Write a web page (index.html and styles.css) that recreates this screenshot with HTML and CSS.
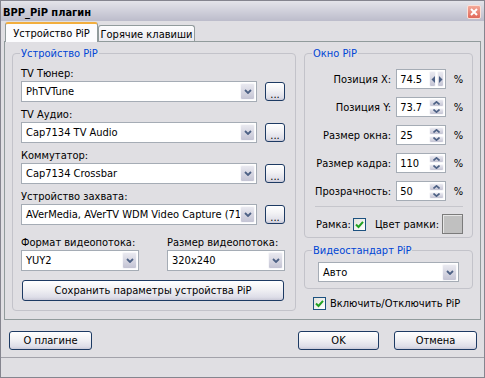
FILE: index.html
```html
<!DOCTYPE html>
<html lang="ru">
<head>
  <meta charset="UTF-8" />
  <title>BPP_PiP плагин</title>
  <link rel="stylesheet" href="styles.css">
</head>
<body>
  <div class="window">
    <div class="titlebar">
      <span class="title">BPP_PiP плагин</span>
      <span class="close"><svg width="8" height="8" viewBox="0 0 8 8"><path d="M1 1L7 7M7 1L1 7" stroke="#fff" stroke-width="2"/></svg></span>
    </div>

    <div class="client">
      <div class="tabs">
        <div class="tab active">Устройство PiP</div>
        <div class="tab">Горячие клавиши</div>
      </div>

      <div class="page">
        <fieldset class="group device">
          <legend>Устройство PiP</legend>
          <div class="fields">
            <div class="field">
              <div class="lbl">TV Тюнер:</div>
              <div class="row">
                <div class="combo"><span class="val">PhTVTune</span><span class="drop"><svg width="8" height="5" viewBox="0 0 8 5"><path d="M1 1L4 4L7 1" fill="none" stroke="#4d6185" stroke-width="1.8"/></svg></span></div>
                <button class="btn more">...</button>
              </div>
            </div>
            <div class="field">
              <div class="lbl">TV Аудио:</div>
              <div class="row">
                <div class="combo"><span class="val">Cap7134 TV Audio</span><span class="drop"><svg width="8" height="5" viewBox="0 0 8 5"><path d="M1 1L4 4L7 1" fill="none" stroke="#4d6185" stroke-width="1.8"/></svg></span></div>
                <button class="btn more">...</button>
              </div>
            </div>
            <div class="field">
              <div class="lbl">Коммутатор:</div>
              <div class="row">
                <div class="combo"><span class="val">Cap7134 Crossbar</span><span class="drop"><svg width="8" height="5" viewBox="0 0 8 5"><path d="M1 1L4 4L7 1" fill="none" stroke="#4d6185" stroke-width="1.8"/></svg></span></div>
                <button class="btn more">...</button>
              </div>
            </div>
            <div class="field">
              <div class="lbl">Устройство захвата:</div>
              <div class="row">
                <div class="combo"><span class="val">AVerMedia, AVerTV WDM Video Capture (7134)</span><span class="drop"><svg width="8" height="5" viewBox="0 0 8 5"><path d="M1 1L4 4L7 1" fill="none" stroke="#4d6185" stroke-width="1.8"/></svg></span></div>
                <button class="btn more">...</button>
              </div>
            </div>
          </div>

          <div class="pair">
            <div class="field">
              <div class="lbl">Формат видеопотока:</div>
              <div class="combo"><span class="val">YUY2</span><span class="drop"><svg width="8" height="5" viewBox="0 0 8 5"><path d="M1 1L4 4L7 1" fill="none" stroke="#4d6185" stroke-width="1.8"/></svg></span></div>
            </div>
            <div class="field">
              <div class="lbl">Размер видеопотока:</div>
              <div class="combo"><span class="val">320x240</span><span class="drop"><svg width="8" height="5" viewBox="0 0 8 5"><path d="M1 1L4 4L7 1" fill="none" stroke="#4d6185" stroke-width="1.8"/></svg></span></div>
            </div>
          </div>

          <button class="btn save">Сохранить параметры устройства PiP</button>
        </fieldset>

        <div class="side">
          <fieldset class="group pip">
            <legend>Окно PiP</legend>
            <div class="params">
              <span class="plbl">Позиция X:</span>
              <div class="spin"><span class="val">74.5</span>
                <span class="arrows horiz">
                  <i><svg width="4" height="7" viewBox="0 0 4 7"><path d="M4 0V7L0.5 3.5Z" fill="#4d6185"/></svg></i>
                  <i><svg width="4" height="7" viewBox="0 0 4 7"><path d="M0 0V7L3.5 3.5Z" fill="#4d6185"/></svg></i>
                </span>
              </div>
              <span class="pct">%</span>

              <span class="plbl">Позиция Y:</span>
              <div class="spin"><span class="val">73.7</span>
                <span class="arrows">
                  <i><svg width="7" height="4" viewBox="0 0 7 4"><path d="M0.5 3.5L3.5 0.8L6.5 3.5" fill="none" stroke="#4d6185" stroke-width="1.6"/></svg></i>
                  <i><svg width="7" height="4" viewBox="0 0 7 4"><path d="M0.5 0.5L3.5 3.2L6.5 0.5" fill="none" stroke="#4d6185" stroke-width="1.6"/></svg></i>
                </span>
              </div>
              <span class="pct">%</span>

              <span class="plbl">Размер окна:</span>
              <div class="spin"><span class="val">25</span>
                <span class="arrows">
                  <i><svg width="7" height="4" viewBox="0 0 7 4"><path d="M0.5 3.5L3.5 0.8L6.5 3.5" fill="none" stroke="#4d6185" stroke-width="1.6"/></svg></i>
                  <i><svg width="7" height="4" viewBox="0 0 7 4"><path d="M0.5 0.5L3.5 3.2L6.5 0.5" fill="none" stroke="#4d6185" stroke-width="1.6"/></svg></i>
                </span>
              </div>
              <span class="pct">%</span>

              <span class="plbl">Размер кадра:</span>
              <div class="spin"><span class="val">110</span>
                <span class="arrows">
                  <i><svg width="7" height="4" viewBox="0 0 7 4"><path d="M0.5 3.5L3.5 0.8L6.5 3.5" fill="none" stroke="#4d6185" stroke-width="1.6"/></svg></i>
                  <i><svg width="7" height="4" viewBox="0 0 7 4"><path d="M0.5 0.5L3.5 3.2L6.5 0.5" fill="none" stroke="#4d6185" stroke-width="1.6"/></svg></i>
                </span>
              </div>
              <span class="pct">%</span>

              <span class="plbl">Прозрачность:</span>
              <div class="spin"><span class="val">50</span>
                <span class="arrows">
                  <i><svg width="7" height="4" viewBox="0 0 7 4"><path d="M0.5 3.5L3.5 0.8L6.5 3.5" fill="none" stroke="#4d6185" stroke-width="1.6"/></svg></i>
                  <i><svg width="7" height="4" viewBox="0 0 7 4"><path d="M0.5 0.5L3.5 3.2L6.5 0.5" fill="none" stroke="#4d6185" stroke-width="1.6"/></svg></i>
                </span>
              </div>
              <span class="pct">%</span>
            </div>

            <div class="sep"></div>

            <div class="frame-row">
              <span>Рамка:</span>
              <span class="check"><svg width="9" height="9" viewBox="0 0 9 9"><path d="M1 4.5L3.5 7L8 1.8" fill="none" stroke="#21a121" stroke-width="2"/></svg></span>
              <span class="color-lbl">Цвет рамки:</span>
              <span class="swatch"></span>
            </div>
          </fieldset>

          <fieldset class="group std">
            <legend>Видеостандарт PiP</legend>
            <div class="combo"><span class="val">Авто</span><span class="drop"><svg width="8" height="5" viewBox="0 0 8 5"><path d="M1 1L4 4L7 1" fill="none" stroke="#4d6185" stroke-width="1.8"/></svg></span></div>
          </fieldset>

          <div class="enable">
            <span class="check"><svg width="9" height="9" viewBox="0 0 9 9"><path d="M1 4.5L3.5 7L8 1.8" fill="none" stroke="#21a121" stroke-width="2"/></svg></span>
            <span>Включить/Отключить PiP</span>
          </div>
        </div>
      </div>

      <div class="footer">
        <button class="btn wide">О плагине</button>
        <button class="btn ok">OK</button>
        <button class="btn wide">Отмена</button>
      </div>
    </div>

    <div class="status"></div>
  </div>
</body>
</html>
```

FILE: styles.css
```css
* { box-sizing: border-box; }
body { margin: 0; background: #e0dfe3; font-family: "DejaVu Sans Condensed", "Liberation Sans", sans-serif; font-size: 11px; color: #000; }

.window { width: 485px; height: 378px; display: flex; flex-direction: column; background: #e0dfe3; border: 1px solid #85858f; }

.titlebar { height: 20px; flex: none; display: flex; align-items: flex-start; padding: 0 3px 0 2px; background: linear-gradient(#e4e4ea, #bcbccb); }
.title { font-weight: bold; line-height: 13px; margin-top: 5px; }
.close { margin-left: auto; margin-top: 4px; width: 14px; height: 14px; border: 1px solid #fbe0d8; border-radius: 2px; background: linear-gradient(#f3a898, #e0685a); display: flex; align-items: center; justify-content: center; }

.client { flex: none; padding: 1px 3px 0; }

.tabs { display: flex; align-items: flex-end; height: 20px; margin: 0 0 -1px 1px; position: relative; z-index: 1; }
.tab { height: 16px; margin-bottom: 1px; padding: 2px 0 0; width: 97px; text-align: center; line-height: 13px; border: 1px solid #919b9c; border-bottom: none; border-radius: 3px 3px 0 0; background: linear-gradient(#fdfdfe, #e9e9ee); }
.tab.active { width: 93px; height: 20px; margin-bottom: 0; padding-top: 3px; border-top: 2px solid #f2ae3e; background: #fcfcfe; }

.page { height: 279px; display: flex; gap: 8px; padding: 5px 7px 0; border: 1px solid #919b9c; background: #e0dfe3; }

.group { margin: 0; min-width: 0; border: 1px solid #c3c3ca; border-radius: 4px; }
.group legend { color: #0046d5; padding: 0 1px; line-height: 13px; }

.device { width: 284px; height: 264px; padding: 0 10px 9px 8px; }
.device legend { margin-left: -1px; }
.fields { display: flex; flex-direction: column; gap: 6px; margin-top: 7px; }
.lbl { line-height: 13px; margin-bottom: 1px; white-space: nowrap; }
.row { display: flex; align-items: center; gap: 8px; }
.row .combo { flex: 1; }
.pair { display: flex; justify-content: space-between; margin-top: 11px; }
.pair .field { width: 118px; }

.combo { display: flex; align-items: center; height: 21px; min-width: 0; border: 1px solid #a5acb5; background: #fff; padding: 1px; }
.combo .val { flex: 1; min-width: 0; padding-left: 3px; white-space: nowrap; overflow: hidden; }
.drop { flex: none; width: 15px; height: 17px; display: flex; align-items: center; justify-content: center; border: 1px solid #f7f7fa; border-radius: 2px; background: linear-gradient(#e9e9f0, #c4c4d4); }

.btn { font: inherit; color: #000; padding: 0; border: 1px solid #1d3a63; border-radius: 3px; background: linear-gradient(#ffffff, #f1f1f4 45%, #dedee8 85%, #cacad8); }
.more { flex: none; width: 20px; height: 19px; line-height: 19px; padding-top: 2px; }
.save { display: block; width: 262px; height: 21px; margin: 9px 0 0 1px; }

.side { width: 169px; display: flex; flex-direction: column; }

.pip { height: 191px; padding: 0 9px 3px 10px; }
.pip legend { margin-left: -3px; }
.params { display: grid; grid-template-columns: 1fr 50px 12px; column-gap: 5px; row-gap: 8px; align-items: center; margin-top: 9px; }
.plbl { text-align: right; white-space: nowrap; }
.pct { text-align: right; }
.spin { display: flex; align-items: center; height: 20px; border: 1px solid #a5acb5; background: #fff; padding: 1px; }
.spin .val { flex: 1; padding-left: 2px; }
.arrows { flex: none; width: 15px; height: 16px; display: flex; flex-direction: column; gap: 1px; }
.arrows.horiz { flex-direction: row; }
.arrows i { flex: 1; display: flex; align-items: center; justify-content: center; border: 1px solid #f7f7fa; border-radius: 2px; background: linear-gradient(#e9e9f0, #c4c4d4); }

.sep { height: 1px; margin-top: 5px; background: #c6c6cc; }
.frame-row { display: flex; align-items: center; height: 20px; margin-top: 7px; padding-left: 1px; }
.frame-row .check { margin-left: 2px; }
.color-lbl { margin-left: auto; margin-right: 3px; }
.swatch { width: 21px; height: 20px; border: 1px solid #7b7b7b; background: #c0c0c0; box-shadow: inset 1px 1px 0 #e6e6e6; }

.check { flex: none; width: 13px; height: 13px; display: flex; align-items: center; justify-content: center; border: 1px solid #1c5180; background: linear-gradient(135deg, #e2e2dc, #fff); }

.std { height: 45px; margin-top: 6px; padding: 0 13px 6px 13px; }
.std legend { margin-left: -6px; }
.std .combo { height: 20px; margin-top: 5px; }

.enable { display: flex; align-items: center; gap: 4px; margin-top: 8px; padding-left: 9px; }

.footer { display: flex; padding: 11px 4px 7px 5px; }
.footer .btn { height: 19px; }
.wide { width: 83px; }
.ok { width: 81px; margin: 0 15px 0 auto; }

.status { flex: 1; border-top: 1px solid #a2a2aa; }
```
